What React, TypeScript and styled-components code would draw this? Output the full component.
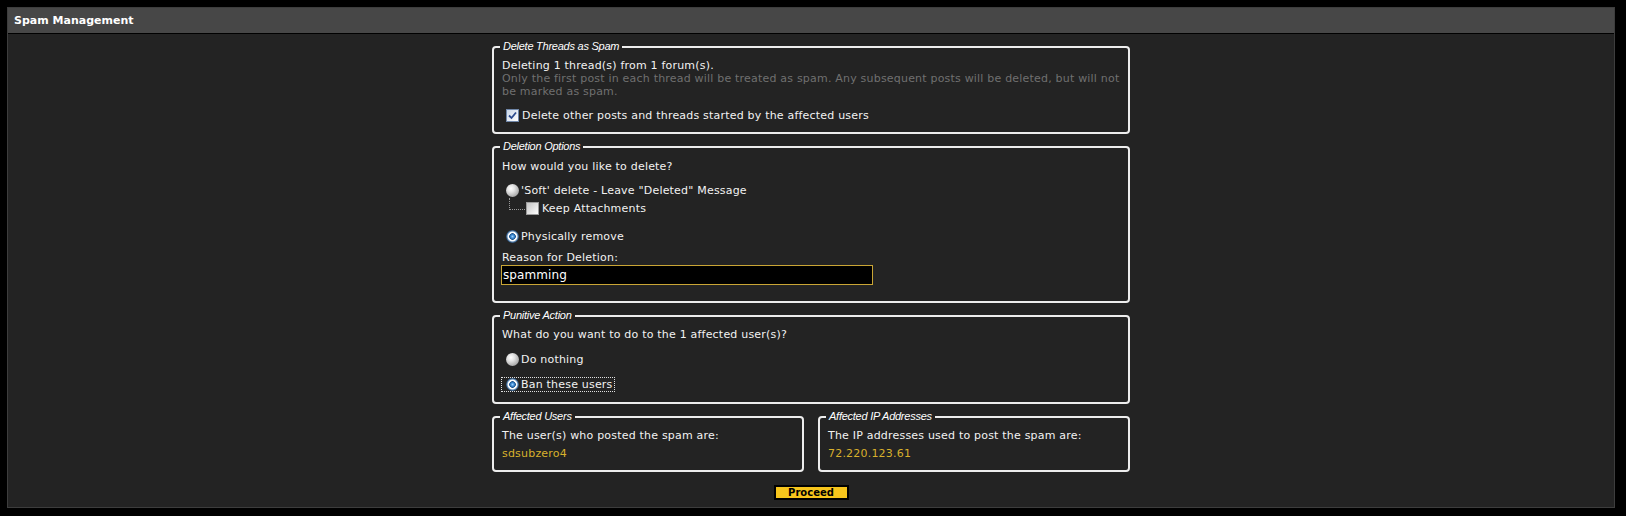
import React from "react";
import styled, { createGlobalStyle } from "styled-components";

const GlobalStyle = createGlobalStyle`
  html, body { margin: 0; padding: 0; background: #000; }
  body { font-family: "DejaVu Sans", Verdana, sans-serif; }
`;

const Page = styled.div`
  padding: 7px 11px 8px 7px;
`;

const Panel = styled.section`
  border: 1px solid #3d3d3d;
  background: #232323;
`;

const Header = styled.h2`
  margin: 0;
  height: 25px;
  padding: 0 6px;
  background: #474747;
  border-bottom: 1px solid #000;
  color: #fff;
  font: bold 11px/25px "DejaVu Sans", Verdana, sans-serif;
`;

const Body = styled.div`
  display: flex;
  flex-direction: column;
  align-items: center;
  padding: 6px 0 7px;
`;

const Form = styled.div`
  width: 638px;
  display: flex;
  flex-direction: column;
  gap: 6px;
`;

const Fieldset = styled.fieldset<{ $padTop?: number; $padBottom: number }>`
  margin: 0;
  min-width: 0;
  border: 2px solid #ededed;
  border-radius: 4px;
  padding: ${(p) => p.$padTop ?? 6}px 8px ${(p) => p.$padBottom}px;
  display: flex;
  flex-direction: column;
  align-items: flex-start;
`;

const Legend = styled.legend`
  padding: 0 3px;
  margin-left: -2px;
  font: italic 11px/13px "Liberation Sans", Arial, sans-serif;
  letter-spacing: -0.25px;
  color: #fff;
`;

type Tone = "normal" | "muted" | "gold";
const toneColor: Record<Tone, string> = {
  normal: "#f2f2f2",
  muted: "#707070",
  gold: "#d8b02c",
};

const Text = styled.div<{ $mt?: number; $tone?: Tone }>`
  margin-top: ${(p) => p.$mt ?? 0}px;
  font-size: 11px;
  line-height: 13px;
  letter-spacing: 0.2px;
  color: ${(p) => toneColor[p.$tone ?? "normal"]};
`;

const Option = styled.label<{ $mt?: number; $focused?: boolean }>`
  display: flex;
  align-items: center;
  margin-top: ${(p) => p.$mt ?? 0}px;
  height: 13px;
  font-size: 11px;
  line-height: 13px;
  letter-spacing: 0.2px;
  color: #f2f2f2;
  outline: ${(p) => (p.$focused ? "1px dotted #e0e0e0" : "none")};
  padding-right: ${(p) => (p.$focused ? "1px" : "0")};
`;

const Radio = styled.input.attrs({ type: "radio" })`
  appearance: none;
  width: 13px;
  height: 13px;
  margin: 0 2px 0 4px;
  border-radius: 50%;
  flex: none;
  background: radial-gradient(circle at 38% 35%, #ffffff 0, #e4e4e4 30%, #b4b4b4 65%, #8a8a8a 100%);
  &:checked {
    background: radial-gradient(
      circle at 50% 50%,
      #9fd0ff 0,
      #3f8fd8 1.6px,
      #1d5590 3px,
      #f4f7fb 3.6px,
      #ffffff 4.4px,
      #5d86b0 5.4px,
      #23466d 6.5px
    );
  }
`;

const Box = styled.span<{ $checked?: boolean; $ml?: number }>`
  display: inline-flex;
  align-items: center;
  justify-content: center;
  box-sizing: border-box;
  width: 13px;
  height: 13px;
  flex: none;
  margin: 0 3px 0 ${(p) => p.$ml ?? 4}px;
  border: 1px solid ${(p) => (p.$checked ? "#6f86a8" : "#9a9a9a")};
  background: ${(p) =>
    p.$checked
      ? "linear-gradient(135deg, #c9d6e8 0%, #ffffff 100%)"
      : "linear-gradient(135deg, #c4c4c4 0%, #ffffff 100%)"};
`;

const Check = () => (
  <svg width="9" height="9" viewBox="0 0 9 9">
    <path d="M1 4.5 L3.5 7 L8 1.5" fill="none" stroke="#2b4a8e" strokeWidth="1.8" />
  </svg>
);

const Checkbox = ({ checked, ml }: { checked?: boolean; ml?: number }) => (
  <Box $checked={checked} $ml={ml} role="checkbox" aria-checked={checked ? "true" : "false"}>
    {checked ? <Check /> : null}
  </Box>
);

const SubRow = styled.div<{ $mt?: number }>`
  display: flex;
  align-items: center;
  height: 13px;
  margin-top: ${(p) => p.$mt ?? 0}px;
  font-size: 11px;
  line-height: 13px;
  letter-spacing: 0.2px;
  color: #f2f2f2;
`;

const Connector = styled.span`
  align-self: flex-start;
  width: 15px;
  height: 11px;
  margin: -4px 0 0 7px;
  border-left: 1px dotted #9a9a9a;
  border-bottom: 1px dotted #9a9a9a;
  flex: none;
`;

const ReasonInput = styled.input`
  box-sizing: border-box;
  width: 372px;
  height: 20px;
  margin: 1px 0 0 -1px;
  padding: 0 1px;
  background: #000;
  border: 1px solid #c9a535;
  color: #fff;
  font: 12px "DejaVu Sans", Verdana, sans-serif;
  letter-spacing: 0.1px;
  outline: none;
`;

const Pair = styled.div`
  display: grid;
  grid-template-columns: 1fr 1fr;
  gap: 14px;
`;

const Proceed = styled.button`
  box-sizing: border-box;
  width: 75px;
  height: 15px;
  margin-top: 13px;
  padding: 0;
  background: #f7c51c;
  border: 2px solid #000;
  color: #000;
  font: bold 10px/11px "DejaVu Sans", Verdana, sans-serif;
  cursor: pointer;
`;

export default function App() {
  return (
    <>
      <GlobalStyle />
      <Page>
        <Panel>
          <Header>Spam Management</Header>
          <Body>
            <Form>
              <Fieldset $padBottom={10}>
                <Legend>Delete Threads as Spam</Legend>
                <Text>Deleting 1 thread(s) from 1 forum(s).</Text>
                <Text $tone="muted">
                  Only the first post in each thread will be treated as spam. Any subsequent posts will be deleted, but will not be marked as spam.
                </Text>
                <SubRow $mt={11}>
                  <Checkbox checked />
                  Delete other posts and threads started by the affected users
                </SubRow>
              </Fieldset>

              <Fieldset $padTop={7} $padBottom={16}>
                <Legend>Deletion Options</Legend>
                <Text>How would you like to delete?</Text>
                <Option $mt={11}>
                  <Radio name="deletetype" />
                  'Soft' delete - Leave "Deleted" Message
                </Option>
                <SubRow $mt={5}>
                  <Connector />
                  <Checkbox ml={1} />
                  Keep Attachments
                </SubRow>
                <Option $mt={15}>
                  <Radio name="deletetype" defaultChecked />
                  Physically remove
                </Option>
                <Text $mt={8}>Reason for Deletion:</Text>
                <ReasonInput defaultValue="spamming" />
              </Fieldset>

              <Fieldset $padBottom={11}>
                <Legend>Punitive Action</Legend>
                <Text>What do you want to do to the 1 affected user(s)?</Text>
                <Option $mt={12}>
                  <Radio name="punitive" />
                  Do nothing
                </Option>
                <Option $mt={12} $focused>
                  <Radio name="punitive" defaultChecked />
                  Ban these users
                </Option>
              </Fieldset>

              <Pair>
                <Fieldset $padBottom={10}>
                  <Legend>Affected Users</Legend>
                  <Text>The user(s) who posted the spam are:</Text>
                  <Text $mt={5} $tone="gold">sdsubzero4</Text>
                </Fieldset>
                <Fieldset $padBottom={10}>
                  <Legend>Affected IP Addresses</Legend>
                  <Text>The IP addresses used to post the spam are:</Text>
                  <Text $mt={5} $tone="gold">72.220.123.61</Text>
                </Fieldset>
              </Pair>
            </Form>
            <Proceed>Proceed</Proceed>
          </Body>
        </Panel>
      </Page>
    </>
  );
}
